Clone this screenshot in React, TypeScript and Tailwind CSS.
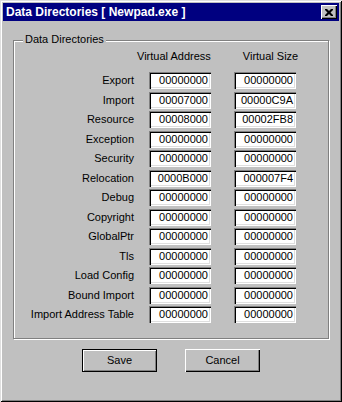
import React from "react";

interface DirEntry {
  name: string;
  address: string;
  size: string;
}

const entries: DirEntry[] = [
  { name: "Export", address: "00000000", size: "00000000" },
  { name: "Import", address: "00007000", size: "00000C9A" },
  { name: "Resource", address: "00008000", size: "00002FB8" },
  { name: "Exception", address: "00000000", size: "00000000" },
  { name: "Security", address: "00000000", size: "00000000" },
  { name: "Relocation", address: "0000B000", size: "000007F4" },
  { name: "Debug", address: "00000000", size: "00000000" },
  { name: "Copyright", address: "00000000", size: "00000000" },
  { name: "GlobalPtr", address: "00000000", size: "00000000" },
  { name: "Tls", address: "00000000", size: "00000000" },
  { name: "Load Config", address: "00000000", size: "00000000" },
  { name: "Bound Import", address: "00000000", size: "00000000" },
  { name: "Import Address Table", address: "00000000", size: "00000000" },
];

// sunken win9x edit box
const Field = ({ value, className = "" }: { value: string; className?: string }) => (
  <div
    className={`w-[62px] h-[17px] bg-white flex items-center justify-end pr-[3px] leading-none shadow-[inset_1px_1px_0_#808080,inset_2px_2px_0_#000,inset_-1px_-1px_0_#fff,inset_-2px_-2px_0_#dfdfdf] ${className}`}
  >
    {value}
  </div>
);

const Button = ({ label, isDefault = false }: { label: string; isDefault?: boolean }) => (
  <button
    className={`w-[75px] h-[23px] bg-[#c0c0c0] flex items-center justify-center text-[11px] text-black ${
      isDefault
        ? "shadow-[inset_1px_1px_0_#000,inset_-1px_-1px_0_#000,inset_2px_2px_0_#fff,inset_-2px_-2px_0_#808080]"
        : "shadow-[inset_1px_1px_0_#fff,inset_-1px_-1px_0_#000,inset_-2px_-2px_0_#808080]"
    }`}
  >
    {label}
  </button>
);

export default function App() {
  return (
    <div className="w-[342px] h-[402px] bg-[#c0c0c0] p-[3px] flex flex-col font-['Liberation_Sans',Arial,sans-serif] text-[11px] text-black shadow-[inset_1px_1px_0_#dfdfdf,inset_-1px_-1px_0_#000,inset_2px_2px_0_#fff,inset_-2px_-2px_0_#808080]">
      {/* Title bar */}
      <div className="h-[18px] bg-[#000080] flex items-center justify-between pl-[3px] pr-[2px]">
        <span className="text-white font-bold text-[12px] leading-none">
          Data Directories [ Newpad.exe ]
        </span>
        <div className="w-[16px] h-[14px] bg-[#c0c0c0] flex items-center justify-center shadow-[inset_1px_1px_0_#fff,inset_-1px_-1px_0_#000,inset_-2px_-2px_0_#808080]">
          <svg width="8" height="7" viewBox="0 0 8 7">
            <path d="M0 0h2l2 2 2-2h2v1L5.5 3.5 8 6v1H6L4 5 2 7H0V6l2.5-2.5L0 1z" fill="#000" />
          </svg>
        </div>
      </div>

      {/* Group box */}
      <div className="relative mx-[10px] mt-[19px] border border-[#808080] shadow-[inset_1px_1px_0_#fff,1px_1px_0_#fff] pt-[7px] pb-[15px]">
        <span className="absolute -top-[7px] left-[9px] px-[2px] bg-[#c0c0c0] leading-none">
          Data Directories
        </span>
        <div className="flex h-[16px] items-center leading-none">
          <span className="ml-[123px]">Virtual Address</span>
          <span className="ml-[32px]">Virtual Size</span>
        </div>
        <div className="flex flex-col gap-[2.5px] mt-[8px]">
          {entries.map((e) => (
            <div key={e.name} className="flex items-center">
              <span className="w-[120px] text-right leading-none">{e.name}</span>
              <Field value={e.address} className="ml-[15px]" />
              <Field value={e.size} className="ml-[23px]" />
            </div>
          ))}
        </div>
      </div>

      {/* Buttons */}
      <div className="flex justify-center gap-[28px] mt-[10px]">
        <Button label="Save" isDefault />
        <Button label="Cancel" />
      </div>
    </div>
  );
}
